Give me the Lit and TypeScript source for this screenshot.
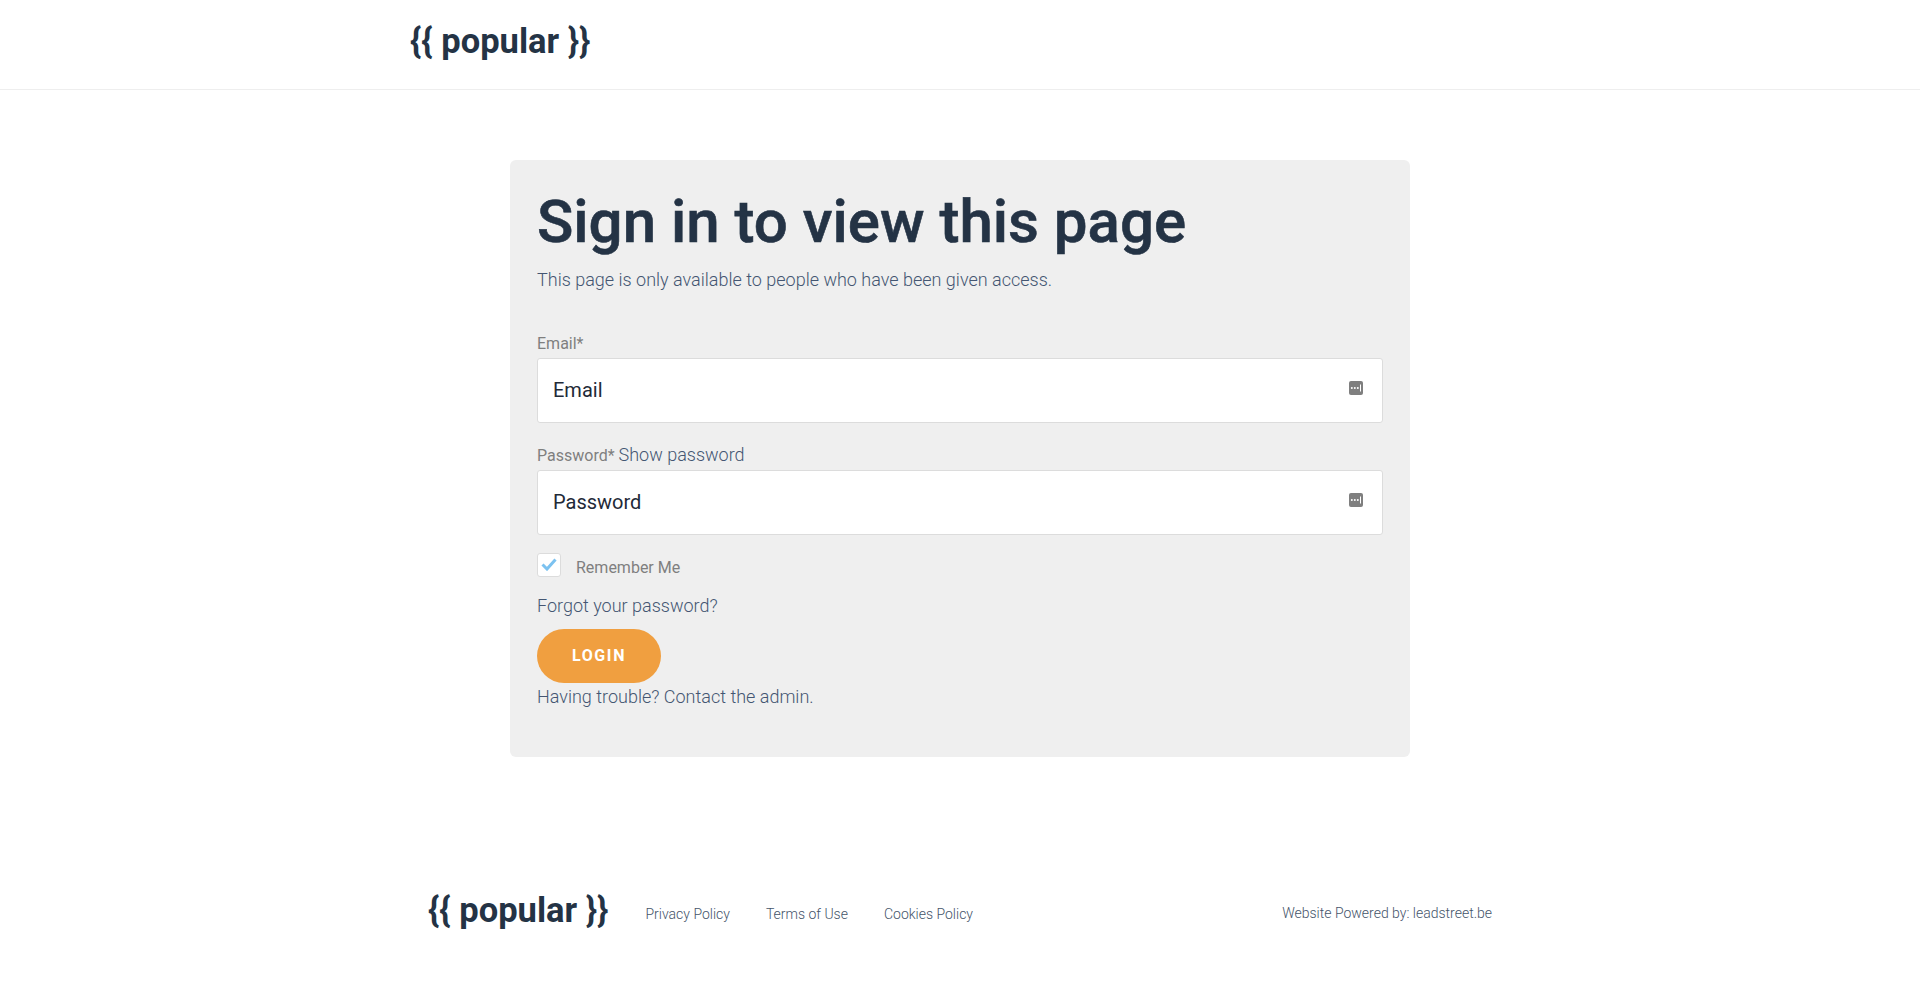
import { LitElement, html, css } from "lit";
import { customElement } from "lit/decorators.js";

const keyIcon = html`<svg class="key" viewBox="0 0 14 14" width="14" height="14" aria-hidden="true">
  <rect width="14" height="14" rx="2" fill="#7f7f7f"></rect>
  <circle cx="2.8" cy="7" r="1" fill="#fff"></circle>
  <circle cx="5.8" cy="7" r="1" fill="#fff"></circle>
  <circle cx="8.8" cy="7" r="1" fill="#fff"></circle>
  <rect x="11" y="3.5" width="1" height="7" fill="#fff"></rect>
</svg>`;

@customElement("app-root")
export class AppRoot extends LitElement {
  static styles = css`
    :host { display: block; font-family: Roboto, "Liberation Sans", sans-serif; color: #243345; background: #fff; height: 996px; overflow: hidden; }
    * { box-sizing: border-box; }
    header { height: 90px; border-bottom: 1px solid #eeeeee; }
    .wrap { width: 1100px; margin: 0 auto; }
    .logo { font-size: 34.5px; font-weight: 700; line-height: 42px; color: #243345; white-space: nowrap; }
    header .logo { padding-top: 20px; }
    main { display: flex; justify-content: center; padding-top: 70px; }
    .card { width: 900px; background: #efefef; border-radius: 6px; padding: 26px 27px 47px; }
    h1 { margin: 0; font-size: 60px; line-height: 72px; font-weight: 500; color: #243345; white-space: nowrap; -webkit-text-stroke: 0.6px #243345; }
    .sub { margin: 8px 0 0; font-size: 18px; line-height: 27px; font-weight: 300; color: #445672; }
    .lab { display: block; font-size: 16px; line-height: 20px; color: #7f7f7f; }
    .lab.first { margin-top: 41px; }
    .lab.second { margin-top: 20px; line-height: 24px; }
    .lab a { font-size: 18px; font-weight: 300; color: #445672; }
    .input { height: 65px; margin-top: 4px; background: #fff; border: 1px solid #dcdcdc; border-radius: 3px; display: flex; align-items: center; justify-content: space-between; padding: 0 19px 0 15px; font-size: 20px; color: #1f2a38; }
    .input span { padding-bottom: 2px; }
    .lab.second + .input { margin-top: 2px; }
    .key { margin-top: -5px; }
    .remember { display: flex; align-items: center; gap: 15px; margin-top: 18px; font-size: 16px; color: #7f7f7f; }
    .remember .txt { padding-top: 5px; }
    .box { width: 24px; height: 24px; margin-top: -1px; background: #fff; border: 1px solid #dcdcdc; border-radius: 3px; display: flex; align-items: center; justify-content: center; }
    .forgot { margin: 15px 0 0; font-size: 18px; line-height: 27px; font-weight: 300; color: #445672; }
    .btn { display: flex; align-items: center; justify-content: center; width: 124px; height: 54px; margin-top: 10px; padding-bottom: 1px; border-radius: 27px; background: #f09f40; color: #fff; font-size: 16px; font-weight: 700; letter-spacing: 1.6px; }
    .trouble { margin: 0; font-size: 18px; line-height: 27px; font-weight: 300; color: #445672; }
    footer { margin-top: 132px; }
    .foot { display: flex; align-items: center; padding: 0 18px; }
    .links { display: flex; gap: 36px; margin-left: 37px; padding-top: 7px; font-size: 14px; font-weight: 300; color: #45546a; }
    .power { margin-left: auto; padding-top: 5px; font-size: 14px; font-weight: 300; color: #45546a; }
  `;

  render() {
    return html`
      <header><div class="wrap"><div class="logo">{{ popular }}</div></div></header>
      <main>
        <section class="card">
          <h1>Sign in to view this page</h1>
          <p class="sub">This page is only available to people who have been given access.</p>
          <label class="lab first">Email*</label>
          <div class="input"><span>Email</span>${keyIcon}</div>
          <label class="lab second">Password* <a>Show password</a></label>
          <div class="input"><span>Password</span>${keyIcon}</div>
          <div class="remember">
            <span class="box"><svg width="16" height="13" viewBox="0 0 16 13" aria-hidden="true"><path d="M1.5 6.5l4.5 4.5 8.5-9.5" fill="none" stroke="#7cc2f0" stroke-width="3"></path></svg></span>
            <span class="txt">Remember Me</span>
          </div>
          <p class="forgot">Forgot your password?</p>
          <div class="btn">LOGIN</div>
          <p class="trouble">Having trouble? Contact the admin.</p>
        </section>
      </main>
      <footer><div class="wrap foot">
        <div class="logo">{{ popular }}</div>
        <nav class="links"><span>Privacy Policy</span><span>Terms of Use</span><span>Cookies Policy</span></nav>
        <div class="power">Website Powered by: leadstreet.be</div>
      </div></footer>
    `;
  }
}
